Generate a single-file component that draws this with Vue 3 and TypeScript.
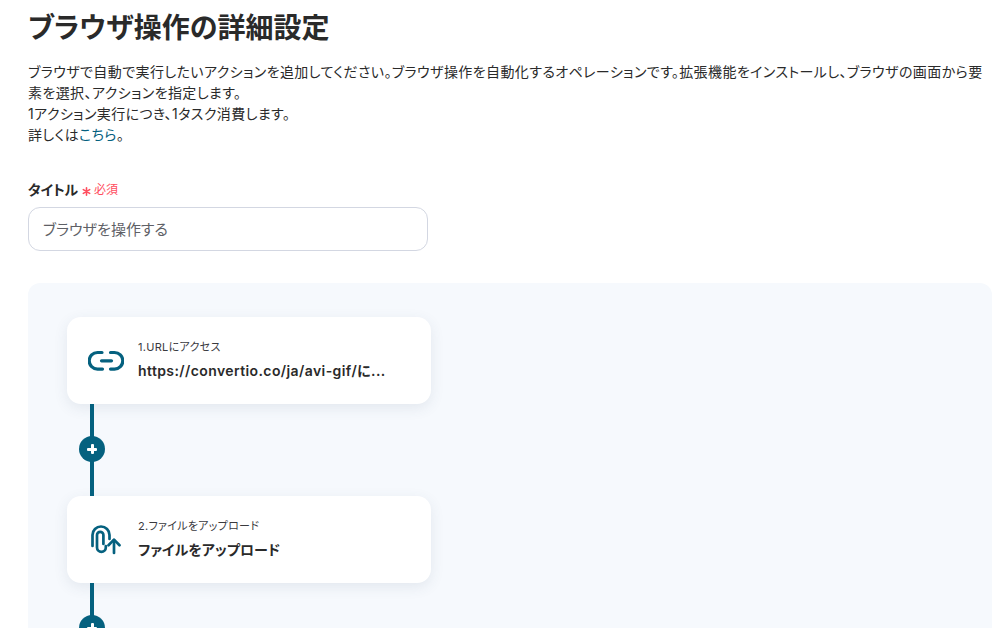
<script setup lang="ts">
interface Step { label: string; value: string; kind: 'link' | 'upload' }
const steps: Step[] = [
  { label: '1.URLにアクセス', value: 'https://convertio.co/ja/avi-gif/に...', kind: 'link' },
  { label: '2.ファイルをアップロード', value: 'ファイルをアップロード', kind: 'upload' },
]
</script>

<template>
  <main class="page">
    <h1 class="title">ブラウザ操作の詳細設定</h1>
    <p class="desc">
      ブラウザで自動で実行したいアクションを追加してください。ブラウザ操作を自動化するオペレーションです。拡張機能をインストールし、ブラウザの画面から要素を選択、アクションを指定します。<br />
      1アクション実行につき、1タスク消費します。<br />
      詳しくは<a class="link">こちら</a>。
    </p>
    <div class="field">
      <div class="label">
        <b>タイトル</b>
        <span class="req">
          <svg width="9" height="9" viewBox="0 0 9 9" stroke="#ff4d5e" stroke-width="1.6" stroke-linecap="round">
            <path d="M4.5.8v7.4M1.3 2.6l6.4 3.8M7.7 2.6L1.3 6.4" />
          </svg>
          必須
        </span>
      </div>
      <div class="input">ブラウザを操作する</div>
    </div>
    <section class="panel">
      <template v-for="s in steps" :key="s.label">
        <article class="card">
          <div class="icon">
            <svg v-if="s.kind === 'link'" width="36" height="22" viewBox="0 0 36 22" fill="none" stroke="#05617f" stroke-width="3.2" stroke-linecap="round" stroke-linejoin="round">
              <path d="M14 2.5H9.5a8.3 8.3 0 0 0 0 16.6h5" />
              <path d="M22.5 2.5h4a8.3 8.3 0 0 1 0 16.6h-4" />
              <path d="M13.5 10.8h10" />
            </svg>
            <svg v-else width="30" height="30" viewBox="0 0 30 30" fill="none" stroke="#05617f" stroke-width="2.7" stroke-linecap="round" stroke-linejoin="round">
              <path d="M1.5 21V10a8.5 8.5 0 0 1 17 0v4" />
              <path d="M12.4 19V10a3.2 3.2 0 0 0-6.4 0v12.5a4.4 4.4 0 0 0 8.8 0V21" />
              <path d="M23 28V15" />
              <path d="M17.5 20.2l5.5-5.6 5.5 5.6" />
            </svg>
          </div>
          <div class="text">
            <div class="small">{{ s.label }}</div>
            <div class="strong" :class="{ latin: s.kind === 'link' }">{{ s.value }}</div>
          </div>
        </article>
        <div class="connector">
          <span class="plus"></span>
        </div>
      </template>
    </section>
  </main>
</template>

<style>
html, body { margin: 0; background: #fff; overflow: hidden; }
</style>

<style scoped>
.page {
  height: 628px;
  overflow: hidden;
  box-sizing: border-box;
  padding: 11px 8px 0 28px;
  color: #2a2a2a;
  font-family: Inter, "Noto Sans CJK JP", sans-serif;
  font-feature-settings: "palt";
}
.title { margin: 0; font-size: 28px; line-height: 34px; font-weight: 700; }
.desc { margin: 16px 0 0; font-size: 14px; line-height: 21px; font-weight: 400; letter-spacing: 0.4px; }
.link { color: #05617f; }
.field { margin-top: 36px; }
.label { display: flex; align-items: center; gap: 4px; font-size: 14px; line-height: 18px; }
.label b { font-weight: 700; letter-spacing: -0.2px; }
.req { color: #ff4d5e; font-size: 12px; display: flex; align-items: center; gap: 3px; }
.req svg { margin-top: 2px; }
.input {
  box-sizing: border-box;
  width: 400px;
  height: 44px;
  margin-top: 8px;
  padding: 0 14px 2px;
  display: flex;
  align-items: center;
  border: 1px solid #d3d7e2;
  border-radius: 12px;
  color: #5e6066;
  font-size: 15px;
}
.panel {
  margin-top: 32px;
  padding: 34px 0 0 39px;
  background: #f6f9fd;
  border-radius: 12px;
  height: 400px;
  box-sizing: border-box;
}
.card {
  box-sizing: border-box;
  width: 364px;
  height: 87px;
  display: flex;
  align-items: center;
  background: #fff;
  border-radius: 14px;
  box-shadow: 0 4px 14px rgba(60, 80, 110, 0.1);
}
.icon { width: 71px; display: flex; justify-content: center; padding-left: 6px; box-sizing: border-box; }
.text { padding-bottom: 1px; }
.small { font-size: 11px; line-height: 16px; color: #3a3a3e; letter-spacing: 0.3px; }
.strong { margin-top: 6px; font-size: 14px; line-height: 20px; font-weight: 600; color: #2a2a2a; letter-spacing: 0.1px; }
.latin { letter-spacing: 0.4px; }
.connector {
  width: 50px;
  height: 92px;
  position: relative;
}
.connector::before {
  content: "";
  position: absolute;
  left: 23px;
  top: 0;
  width: 4px;
  height: 100%;
  background: #05617f;
}
.plus {
  position: absolute;
  left: 12px;
  top: 32px;
  width: 26px;
  height: 26px;
  border-radius: 50%;
  background: #05617f;
}
.plus::before, .plus::after {
  content: "";
  position: absolute;
  background: #fff;
  border-radius: 1px;
}
.plus::before { left: 8px; top: 11.5px; width: 10px; height: 3px; }
.plus::after { left: 11.5px; top: 8px; width: 3px; height: 10px; }
</style>
